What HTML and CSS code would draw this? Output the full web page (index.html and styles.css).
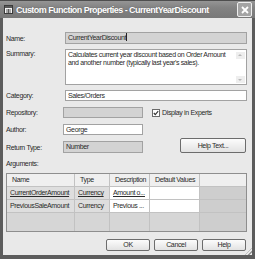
FILE: index.html
```html
<!DOCTYPE html>
<html lang="en">
<head>
    <meta charset="UTF-8">
    <title>Custom Function Properties</title>
    <link rel="stylesheet" href="styles.css">
</head>
<body>
    <div class="window">
        <div class="titlebar">
            <span class="app-icon">
                <svg width="9" height="9" viewBox="0 0 9 9">
                    <rect x="0.5" y="0.5" width="8" height="8" fill="#f4f4f4" stroke="#3a3a3a"/>
                    <rect x="1" y="1" width="7" height="2" fill="#5a5a5a"/>
                    <path d="M2 5h5M2 7h5M4.5 4v4" stroke="#5a5a5a" stroke-width="1"/>
                </svg>
            </span>
            <span class="title">Custom Function Properties - CurrentYearDiscount</span>
            <span class="close">
                <svg width="10" height="10" viewBox="0 0 10 10">
                    <path d="M2 2L8 8M8 2L2 8" stroke="#fff" stroke-width="1.8"/>
                </svg>
            </span>
        </div>

        <div class="client">
            <div class="row row-name">
                <label>Name:</label>
                <div class="field disabled">CurrentYearDiscount<span class="caret"></span></div>
            </div>

            <div class="row row-summary">
                <label>Summary:</label>
                <div class="field memo">
                    <div class="memo-text">Calculates current year discount based on Order Amount<br>and another number (typically last year's sales).</div>
                    <div class="scroll">
                        <span class="arrow up"></span>
                        <span class="arrow down"></span>
                    </div>
                </div>
            </div>

            <div class="row row-category">
                <label>Category:</label>
                <div class="field">Sales/Orders</div>
            </div>

            <div class="row row-repo">
                <label>Repository:</label>
                <div class="field disabled short"></div>
                <span class="check">
                    <svg width="8" height="8" viewBox="0 0 8 8">
                        <rect x="0.5" y="0.5" width="7" height="7" fill="#fff" stroke="#6a6a6a"/>
                        <path d="M1.8 4L3.3 5.6L6.2 2.2" stroke="#333" stroke-width="1.1" fill="none"/>
                    </svg>
                </span>
                <span class="check-label">Display in Experts</span>
            </div>

            <div class="row row-author">
                <label>Author:</label>
                <div class="field short">George</div>
            </div>

            <div class="row row-return">
                <label>Return Type:</label>
                <div class="field disabled short">Number</div>
                <button class="btn btn-help">Help Text...</button>
            </div>

            <div class="args-label">Arguments:</div>

            <div class="grid">
                <div class="cell th">Name</div>
                <div class="cell th">Type</div>
                <div class="cell th">Description</div>
                <div class="cell th">Default Values</div>
                <div class="cell th filler"></div>

                <div class="cell ro link">CurrentOrderAmount</div>
                <div class="cell ro link">Currency</div>
                <div class="cell ed link">Amount o...</div>
                <div class="cell ed"></div>
                <div class="cell filler"></div>

                <div class="cell ro">PreviousSaleAmount</div>
                <div class="cell ro">Currency</div>
                <div class="cell ed">Previous ...</div>
                <div class="cell ed"></div>
                <div class="cell filler"></div>

                <div class="cell empty"></div>
                <div class="cell empty"></div>
                <div class="cell empty"></div>
                <div class="cell empty"></div>
                <div class="cell filler empty"></div>
            </div>

            <div class="buttons">
                <button class="btn">OK</button>
                <button class="btn">Cancel</button>
                <button class="btn">Help</button>
            </div>
            <span class="grip"></span>
        </div>
    </div>
</body>
</html>
```

FILE: styles.css
```css
body {
    margin: 0;
    font-family: "Liberation Sans", Arial, sans-serif;
    font-size: 7px;
    letter-spacing: -0.35px;
    color: #2a2a2a;
}

.window {
    width: 255px;
    height: 259px;
    box-sizing: border-box;
    background: #5c5c5c;
    padding: 0 3px 4px;
    display: flex;
    flex-direction: column;
}

.titlebar {
    height: 18px;
    margin: 0 -3px;
    padding: 0 3px 0 4px;
    display: flex;
    align-items: center;
    background: linear-gradient(#959595, #828282 40%, #787878);
    border-top: 1px solid #4e4e4e;
    box-sizing: border-box;
}

.app-icon {
    width: 9px;
    height: 9px;
    display: flex;
}

.title {
    margin-left: 3px;
    flex: 1;
    color: #fff;
    font-weight: bold;
    font-size: 9px;
    letter-spacing: -0.55px;
    text-shadow: 0 0 1px #555;
}

.close {
    width: 13px;
    height: 13px;
    border: 1px solid #eee;
    border-radius: 2px;
    background: #a4a4a4;
    display: flex;
    align-items: center;
    justify-content: center;
}

.client {
    flex: 1;
    position: relative;
    background: #e9e9e9;
    padding: 14px 5px 0 3px;
    display: flex;
    flex-direction: column;
}

.row {
    display: flex;
    align-items: center;
}

.row label {
    width: 59px;
    flex: none;
}

.field {
    flex: 1;
    box-sizing: border-box;
    height: 100%;
    border: 1px solid #a2a2a2;
    background: #fff;
    padding-left: 2px;
    line-height: 9px;
    white-space: nowrap;
}

.field.disabled {
    background: #d3d3d3;
}

.field.short {
    flex: none;
    width: 80px;
    margin-left: -2px;
}

.caret {
    display: inline-block;
    width: 1px;
    height: 8px;
    background: #222;
    vertical-align: top;
}

.row-name {
    height: 12px;
}

.row-name .field {
    line-height: 10px;
}

.row-summary {
    height: 36px;
    margin-top: 5px;
    align-items: flex-start;
}

.row-summary label {
    padding-top: 1px;
}

.memo {
    display: flex;
    padding-top: 1px;
}

.memo-text {
    flex: 1;
    line-height: 8px;
    white-space: normal;
}

.scroll {
    width: 9px;
    display: flex;
    flex-direction: column;
    justify-content: space-between;
    padding: 1px 1px 1px 0;
}

.arrow {
    height: 7px;
    background: #eee;
    position: relative;
}

.arrow::after {
    content: "";
    position: absolute;
    left: 2px;
    border-left: 2px solid transparent;
    border-right: 2px solid transparent;
}

.arrow.up::after {
    top: 2px;
    border-bottom: 2px solid #b8b8b8;
}

.arrow.down::after {
    top: 3px;
    border-top: 2px solid #b8b8b8;
}

.row-category {
    height: 11px;
    margin-top: 5px;
}

.row-repo {
    height: 11px;
    margin-top: 6px;
}

.check {
    margin-left: 9px;
    display: flex;
}

.check-label {
    margin-left: 2px;
}

.row-author {
    height: 11px;
    margin-top: 6px;
}

.row-return {
    height: 12px;
    margin-top: 6px;
    align-items: flex-end;
}

.row-return label {
    align-self: center;
}

.btn {
    box-sizing: border-box;
    width: 44px;
    height: 12px;
    padding: 0;
    border: 1px solid #6c6c6c;
    border-radius: 2px;
    background: linear-gradient(#fcfcfc, #e2e2e2);
    font: inherit;
    letter-spacing: inherit;
    color: #2a2a2a;
    line-height: 10px;
}

.btn-help {
    width: 66px;
    height: 15px;
    margin-left: auto;
    margin-right: 1px;
}

.args-label {
    margin-top: 7px;
    line-height: 8px;
}

.grid {
    margin-top: 5px;
    height: 59px;
    box-sizing: border-box;
    border: 1px solid #8e8e8e;
    display: grid;
    grid-template-columns: 68px 35px 40px 50px 1fr;
    grid-template-rows: 13px 13px 13px 1fr;
    background: #d6d6d6;
}

.cell {
    border-right: 1px solid #c2c2c2;
    border-bottom: 1px solid #c2c2c2;
    padding-left: 3px;
    line-height: 12px;
    white-space: nowrap;
    overflow: hidden;
}

.th {
    background: #efefef;
    padding-left: 5px;
}

.ro {
    background: #dedede;
}

.ed {
    background: #fff;
}

.filler {
    background: #cecece;
    border-right: none;
}

.th.filler {
    background: #efefef;
}

.empty {
    border-bottom: none;
}

.link {
    text-decoration: underline;
}

.buttons {
    margin-top: 7px;
    display: flex;
    justify-content: flex-end;
    gap: 4px;
    padding-right: 1px;
}

.grip {
    position: absolute;
    right: 0;
    bottom: 0;
    width: 7px;
    height: 7px;
    background: repeating-linear-gradient(135deg, transparent 0 1px, #9a9a9a 1px 2px, transparent 2px 3px);
    clip-path: polygon(100% 0, 100% 100%, 0 100%);
}
```
